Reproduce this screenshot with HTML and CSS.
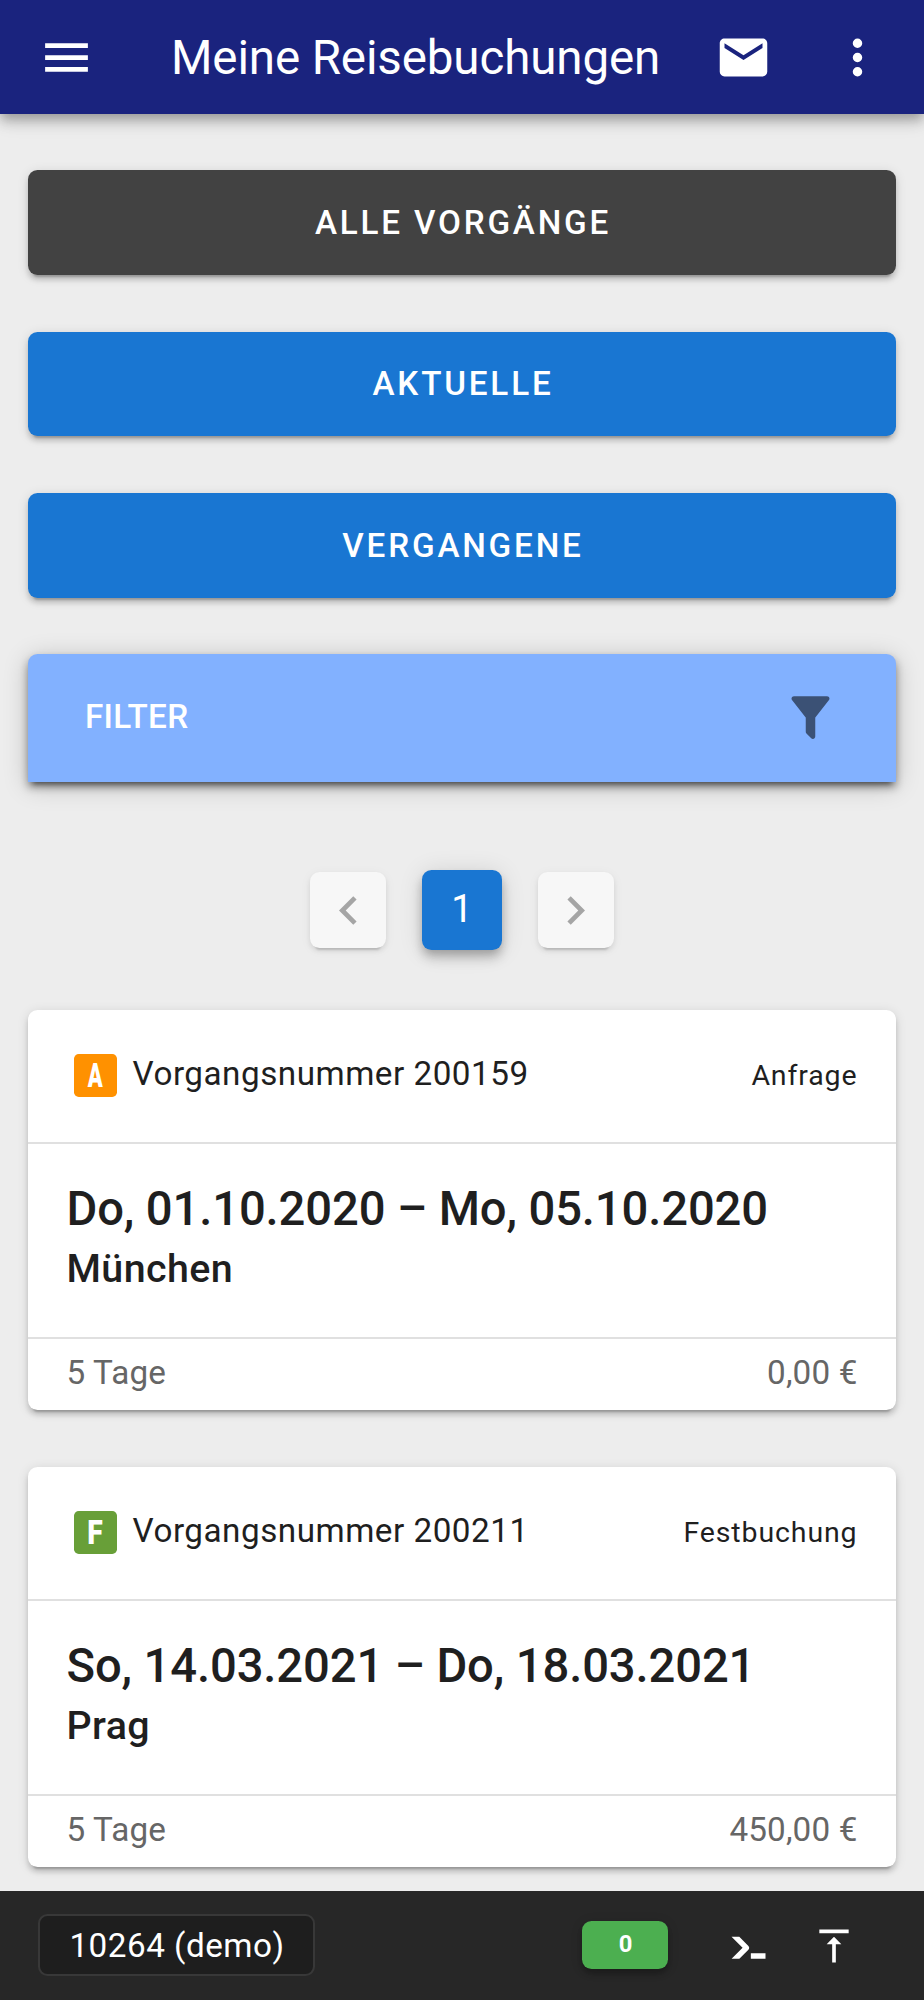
FILE: index.html
```
<!DOCTYPE html>
<html lang="de">
<head>
  <meta charset="UTF-8">
  <title>Meine Reisebuchungen</title>
  <meta name="viewport" content="width=device-width, initial-scale=1.0">
  <link rel="stylesheet" href="styles.css">
</head>
<body>
  <header class="app-bar">
    <button class="icon-btn" aria-label="Menü">
      <svg class="icon" viewBox="0 0 24 24"><path d="M3,6H21V8H3V6M3,11H21V13H3V11M3,16H21V18H3V16Z"/></svg>
    </button>
    <h1 class="app-title">Meine Reisebuchungen</h1>
    <button class="icon-btn" aria-label="Nachrichten">
      <svg class="icon" viewBox="0 0 24 24"><path d="M20,8L12,13L4,8V6L12,11L20,6M20,4H4C2.89,4 2,4.89 2,6V18A2,2 0 0,0 4,20H20A2,2 0 0,0 22,18V6C22,4.89 21.1,4 20,4Z"/></svg>
    </button>
    <button class="icon-btn" aria-label="Mehr">
      <svg class="icon" viewBox="0 0 24 24"><path d="M12,16A2,2 0 0,1 14,18A2,2 0 0,1 12,20A2,2 0 0,1 10,18A2,2 0 0,1 12,16M12,10A2,2 0 0,1 14,12A2,2 0 0,1 12,14A2,2 0 0,1 10,12A2,2 0 0,1 12,10M12,4A2,2 0 0,1 14,6A2,2 0 0,1 12,8A2,2 0 0,1 10,6A2,2 0 0,1 12,4Z"/></svg>
    </button>
  </header>

  <main class="content">
    <div class="tabs">
      <button class="btn btn-active">Alle Vorgänge</button>
      <button class="btn">Aktuelle</button>
      <button class="btn">Vergangene</button>
    </div>

    <div class="filter">
      <span>FILTER</span>
      <svg class="icon" viewBox="0 0 24 24"><path d="M14,12V19.88C14.04,20.18 13.94,20.5 13.71,20.71C13.32,21.1 12.69,21.1 12.3,20.71L10.29,18.7C10.06,18.47 9.96,18.16 10,17.87V12H9.97L4.21,4.62C3.87,4.19 3.95,3.56 4.38,3.22C4.57,3.08 4.78,3 5,3V3H19V3C19.22,3 19.43,3.08 19.62,3.22C20.05,3.56 20.13,4.19 19.79,4.62L14.03,12H14Z"/></svg>
    </div>

    <nav class="pagination">
      <button class="page-nav page-prev" aria-label="Zurück">
        <svg class="icon" viewBox="0 0 24 24"><path d="M15.41,16.58L10.83,12L15.41,7.41L14,6L8,12L14,18L15.41,16.58Z"/></svg>
      </button>
      <button class="page-item">1</button>
      <button class="page-nav page-next" aria-label="Weiter">
        <svg class="icon" viewBox="0 0 24 24"><path d="M8.59,16.58L13.17,12L8.59,7.41L10,6L16,12L10,18L8.59,16.58Z"/></svg>
      </button>
    </nav>

    <section class="card">
      <div class="card-head">
        <span class="badge badge-a"><b>A</b></span>
        <span class="number">Vorgangsnummer 200159</span>
        <span class="status">Anfrage</span>
      </div>
      <div class="card-body">
        <div class="date">Do, 01.10.2020 – Mo, 05.10.2020</div>
        <div class="city">München</div>
      </div>
      <div class="card-foot">
        <span>5 Tage</span>
        <span>0,00 €</span>
      </div>
    </section>

    <section class="card">
      <div class="card-head">
        <span class="badge badge-f"><b>F</b></span>
        <span class="number">Vorgangsnummer 200211</span>
        <span class="status">Festbuchung</span>
      </div>
      <div class="card-body">
        <div class="date">So, 14.03.2021 – Do, 18.03.2021</div>
        <div class="city">Prag</div>
      </div>
      <div class="card-foot">
        <span>5 Tage</span>
        <span>450,00 €</span>
      </div>
    </section>
  </main>

  <footer class="bottom-bar">
    <div class="user">10264 (demo)</div>
    <div class="count">0</div>
    <svg class="icon-small" viewBox="0 0 24 24"><path d="M13,19V16H21V19H13M8.5,13L2.47,7H6.71L11.67,11.95C12.25,12.54 12.25,13.5 11.67,14.07L6.74,19H2.5L8.5,13Z"/></svg>
    <svg class="icon-small" viewBox="0 0 24 24"><path d="M8,11H11V21H13V11H16L12,7L8,11M4,3V5H20V3H4Z"/></svg>
  </footer>
</body>
</html>
```
FILE: styles.css
```
* { box-sizing:border-box; }
body {
  margin:0; height:2000px; overflow:hidden; background:#ededed; color:#1f1f1f;
  font-family:Roboto,"Liberation Sans",sans-serif; font-size:33.25px;
  display:flex; flex-direction:column;
}
button { border:none; padding:0; font-family:inherit; color:inherit; cursor:pointer; }
.icon { width:57px; height:57px; fill:currentColor; display:block; flex:none; }

/* top bar */
.app-bar {
  flex:none; height:114px; padding:0 10px 0 9px; display:flex; align-items:center;
  background:#1a237e; color:#fff; position:relative; z-index:2;
  box-shadow:0 5px 10px -2px rgba(0,0,0,.2), 0 9px 12px rgba(0,0,0,.14), 0 2px 24px rgba(0,0,0,.12);
}
.icon-btn { width:114px; height:114px; background:none; display:flex; align-items:center; justify-content:center; }
.app-title { flex:1; margin:2px 0 0 48px; font-size:47.5px; font-weight:400; line-height:71px; letter-spacing:-.12px; white-space:nowrap; }

.content { flex:1; min-height:0; padding:56px 28px 0; }
.tabs { display:flex; flex-direction:column; gap:57px; }
.btn {
  height:104.5px; padding-left:2px; border-radius:9.5px; background:#1976d2; color:#fff;
  font-size:33.25px; font-weight:500; letter-spacing:2.8px; text-transform:uppercase;
  box-shadow:0 7px 2px -5px rgba(0,0,0,.2), 0 5px 5px rgba(0,0,0,.14), 0 2px 12px rgba(0,0,0,.12);
}
.btn-active { background:#424242; }

.filter {
  margin-top:56.5px; height:128px; padding:0 57px; display:flex; align-items:center; justify-content:space-between;
  background:#82b1ff; color:#fff; font-weight:500; line-height:57px; letter-spacing:.3px; border-radius:9.5px 9.5px 0 0;
  box-shadow:0 7px 5px -5px rgba(0,0,0,.4), 0 5px 9px rgba(0,0,0,.4), 0 4px 26px rgba(0,0,0,.2);
}
.filter span { padding-bottom:4px; }
.filter .icon { margin-bottom:1px; color:rgba(0,0,0,.54); }

/* pagination */
.pagination { margin-top:88px; height:80px; display:flex; align-items:center; justify-content:center; gap:36px; }
.page-nav {
  width:76px; height:76px; border-radius:9.5px; background:#f7f7f7; color:#a5a5a5;
  display:flex; align-items:center; justify-content:center;
  box-shadow:0 7px 2px -5px rgba(0,0,0,.14), 0 3px 5px rgba(0,0,0,.08), 0 2px 12px rgba(0,0,0,.05);
}
.page-prev { padding-left:2px; }
.page-next { padding-right:2px; }
.page-item {
  width:80.5px; height:80.5px; padding-bottom:2px; border-radius:9.5px; background:#1976d2; color:#fff; font-size:38px;
  box-shadow:0 5px 10px -2px rgba(0,0,0,.2), 0 9px 12px rgba(0,0,0,.14), 0 2px 24px rgba(0,0,0,.12);
}

/* booking cards */
.card {
  margin-top:57px; height:400px; background:#fff; border-radius:9.5px; display:flex; flex-direction:column;
  box-shadow:0 7px 2px -5px rgba(0,0,0,.2), 0 5px 5px rgba(0,0,0,.14), 0 2px 12px rgba(0,0,0,.12);
}
.pagination + .card { margin-top:59.5px; }
.card-head {
  height:134.5px; flex:none; padding:0 38.5px 0 45.5px; display:flex; align-items:center; border-bottom:2px solid #e0e0e0;
}
.badge {
  width:43px; height:43px; border-radius:4.75px; color:#fff;
  display:flex; align-items:center; justify-content:center;
}
.badge b { font-size:33.25px; line-height:43px; font-weight:900; }
.badge-a { background:#ff9100; }
.badge-a b { transform:scaleX(.66); }
.badge-f { background:#689f38; }
.badge-f b { transform:scaleX(.85); }
.number { margin-left:16px; padding-bottom:5px; letter-spacing:.5px; }
.status { margin-left:auto; padding-bottom:1px; font-size:28.5px; letter-spacing:.88px; }
.card-body { flex:1; padding:32.5px 38.5px 0; font-weight:500; }
.date { font-size:47.2px; line-height:64px; letter-spacing:-.13px; white-space:nowrap; }
.city { font-size:39.4px; line-height:55px; letter-spacing:.4px; }
.card-foot {
  height:73px; flex:none; padding:0 38.5px 3px; display:flex; align-items:center; justify-content:space-between;
  border-top:2px solid #e0e0e0; color:#666; letter-spacing:.15px;
}

/* bottom bar */
.bottom-bar {
  flex:none; height:109.5px; padding:0 68px 0 38px; display:flex; align-items:center;
  background:#272727; color:#fff; position:relative; z-index:2;
}
.user {
  height:62px; width:277px; padding-left:1px; border:2px solid #383838; border-radius:9.5px; background:#1e1e1e;
  line-height:59px; text-align:center; letter-spacing:.5px; white-space:nowrap;
}
.count {
  margin-left:auto; width:86px; height:48px; padding-left:1px; border-radius:9.5px; background:#4caf50;
  font-size:23.75px; font-weight:700; line-height:46px; text-align:center;
  box-shadow:0 5px 5px rgba(0,0,0,.2), 0 2px 12px rgba(0,0,0,.15);
}
.icon-small { width:44px; height:44px; margin:2px 0 0 59px; fill:#fff; flex:none; }
.icon-small + .icon-small { margin-left:41px; }
```
